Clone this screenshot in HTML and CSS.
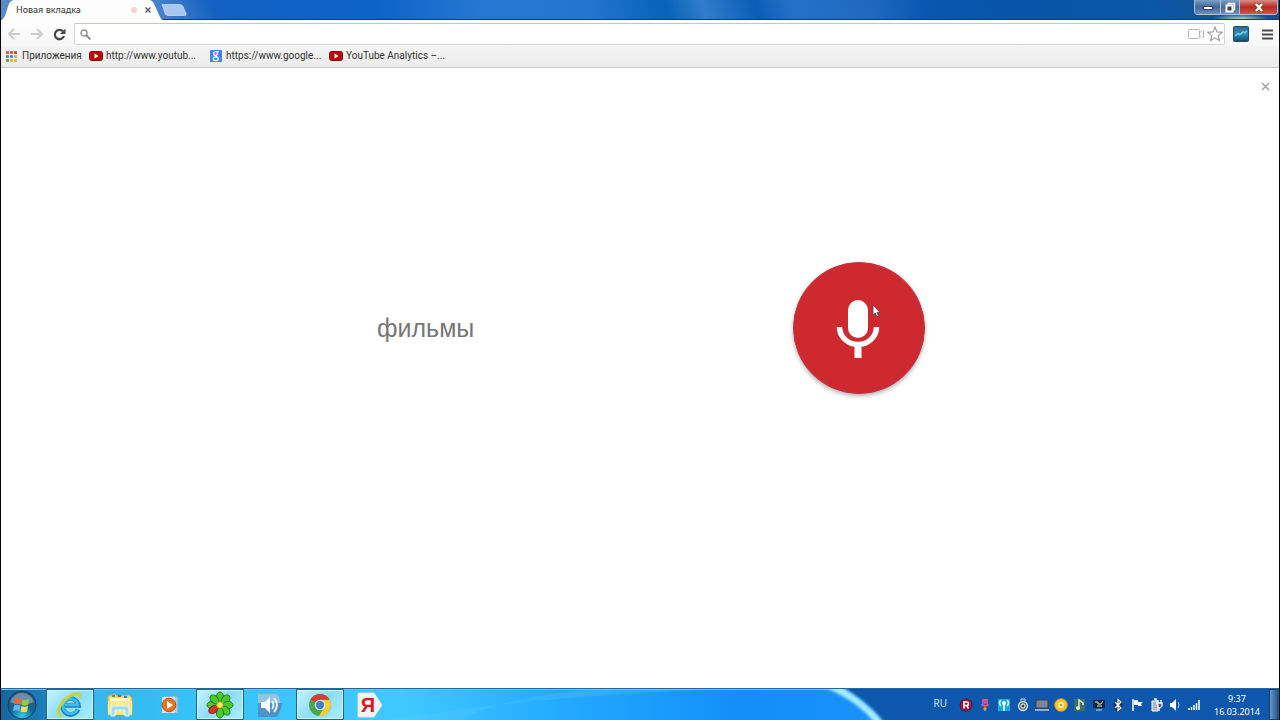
FILE: index.html
```html
<!DOCTYPE html>
<html lang="ru">
<head>
<meta charset="utf-8">
<title>Новая вкладка</title>
<link rel="stylesheet" href="styles.css">
</head>
<body>
<header class="titlebar">
  <div class="tab">
    <svg class="tab-shape" viewBox="0 0 164 20" preserveAspectRatio="none" aria-hidden="true"><path d="M0 20C3 19 4 16 5 13L8 4Q10 0 14 0H150Q153 0 155 4L161 17Q162 20 164 20Z" fill="#fdfdfe"/></svg>
    <span class="tab-title">Новая вкладка</span>
    <span class="tab-dot"></span>
    <button class="tab-close" aria-label="Закрыть вкладку"><svg width="6" height="6" viewBox="0 0 6 6"><path d="M.5.5l5 5M5.5.5l-5 5" stroke="#555" stroke-width="1.4"/></svg></button>
  </div>
  <button class="new-tab" aria-label="Новая вкладка"><svg width="26" height="12" viewBox="0 0 26 12"><path d="M1 .5H19Q21 .5 22 2.500L25 9.500Q25.500 11.500 24 11.500H7Q5 11.500 4 9.500Z" fill="#a9c8ef" stroke="#dcebfb" stroke-opacity=".6"/></svg></button>
  <div class="window-controls">
    <button class="win-min" aria-label="Свернуть"><svg width="10" height="4" viewBox="0 0 10 4"><rect x=".5" y=".5" width="9" height="3" fill="#fff" stroke="#345"/></svg></button>
    <button class="win-restore" aria-label="Восстановить"><svg width="11" height="11" viewBox="0 0 11 11"><path d="M3.500 3V1.500H9.500V7.500H8" fill="none" stroke="#fff" stroke-width="1.500"/><rect x="1.500" y="3.500" width="6" height="6" fill="#345" stroke="#fff" stroke-width="2"/></svg></button>
    <button class="win-close" aria-label="Закрыть"><svg width="10" height="9" viewBox="0 0 10 9"><path d="M2 1l6 7M8 1L2 8" stroke="#633" stroke-width="3.600"/><path d="M2 1l6 7M8 1L2 8" stroke="#fff" stroke-width="2.400"/></svg></button>
  </div>
</header>
<nav class="toolbar">
  <button aria-label="Назад"><svg width="14" height="12" viewBox="0 0 14 12"><path d="M7 1L2 6l5 5M2 6h11" fill="none" stroke="#ccc" stroke-width="2"/></svg></button>
  <button aria-label="Вперёд"><svg width="14" height="12" viewBox="0 0 14 12"><path d="M7 1l5 5-5 5M12 6H1" fill="none" stroke="#ccc" stroke-width="2"/></svg></button>
  <button aria-label="Обновить"><svg width="13" height="13" viewBox="0 0 13 13"><path d="M10 3.300A4.700 4.700 0 1 0 11 8" fill="none" stroke="#484848" stroke-width="2.300"/><path d="M12.500.5V6H7Z" fill="#484848"/></svg></button>
  <div class="omnibox">
    <svg width="11" height="11" viewBox="0 0 11 11"><circle cx="4" cy="4" r="3" fill="#fff" stroke="#888" stroke-width="1.300"/><path d="M6 6l4.300 4.300" stroke="#888" stroke-width="1.900"/></svg>
    <input type="text" aria-label="Адресная строка">
    <svg width="17" height="12" viewBox="0 0 17 12"><rect x=".5" y="1.500" width="11" height="9" rx="1" fill="#fff" stroke="#b6b6b6"/><path d="M11.500 5L14 2.500M11.500 7L14 9.500M15.500 2V10" stroke="#b6b6b6" fill="none"/></svg>
    <svg width="16" height="16" viewBox="0 0 16 16"><path d="M8 1l2 4.900 5 .4-3.800 3.300 1.200 5L8 11.900l-4.400 2.700 1.200-5L1 6.300l5-.4Z" fill="#fff" stroke="#999" stroke-width="1.100"/></svg>
  </div>
  <button class="extension" aria-label="Расширение"><svg width="16" height="16" viewBox="0 0 16 16"><defs><linearGradient id="ext" x2="0" y2="1"><stop stop-color="#386b8b"/><stop offset=".5" stop-color="#2c8dbb"/><stop offset="1" stop-color="#174b6b"/></linearGradient></defs><rect x=".5" y=".5" width="15" height="15" rx="1" fill="url(#ext)" stroke="#254a60"/><path d="M2 10l3-2.500 2 1L10 6l2 .8L14 5" fill="none" stroke="#65cdef" stroke-width="1.600"/></svg></button>
  <button class="menu" aria-label="Меню"><svg width="11" height="11" viewBox="0 0 11 11"><path d="M0 1.500h11M0 5.500h11M0 9.500h11" stroke="#4a4a4a" stroke-width="2.200"/></svg></button>
</nav>
<nav class="bookmarks">
  <a href="#" class="apps"><svg width="11" height="11" viewBox="0 0 11 11"><path d="M0 1.500h3M4 1.500h3" stroke="#d44a3f" stroke-width="2.600"/><path d="M8 1.500h3" stroke="#b34646" stroke-width="2.600"/><path d="M0 5.500h3" stroke="#4d9a52" stroke-width="2.600"/><path d="M4 5.500h3" stroke="#4883cd" stroke-width="2.600"/><path d="M8 5.500h3M4 9.500h3M8 9.500h3" stroke="#e0aa42" stroke-width="2.600"/><path d="M0 9.500h3" stroke="#4d9a52" stroke-width="2.600"/><path d="M3.500 0v11M7.500 0v11" stroke="#f3f3f3"/></svg><span>Приложения</span></a>
  <a href="#" class="mark"><svg width="14" height="14" viewBox="0 0 14 14"><rect x=".5" y="2.500" width="13" height="9" rx="2" fill="#b80b0b" stroke="#930808"/><path d="M5.500 4.500v5L9.500 7Z" fill="#fff"/></svg><span>http://www.youtub...</span></a>
  <a href="#" class="mark"><svg width="14" height="14" viewBox="0 0 14 14"><rect x="1" y="1" width="12" height="12" rx="1" fill="#4385ed"/><circle cx="6.500" cy="4.500" r="1.900" fill="none" stroke="#fff" stroke-width="1.300"/><ellipse cx="6.800" cy="9.800" rx="2.500" ry="1.900" fill="none" stroke="#fff" stroke-width="1.300"/><path d="M7.500 2.700H10M6.500 6.500L8 8" stroke="#fff" stroke-width="1.200"/></svg><span>https://www.google...</span></a>
  <a href="#" class="mark"><svg width="14" height="14" viewBox="0 0 14 14"><rect x=".5" y="2.500" width="13" height="9" rx="2" fill="#b80b0b" stroke="#930808"/><path d="M5.500 4.500v5L9.500 7Z" fill="#fff"/></svg><span>YouTube Analytics –...</span></a>
</nav>
<main class="page">
  <button class="page-close" aria-label="Закрыть поиск"><svg width="9" height="9" viewBox="0 0 9 9"><path d="M1 1l7 7M8 1L1 8" stroke="#a2a2a2" stroke-width="1.500"/></svg></button>
  <section class="voice">
    <p class="phrase">фильмы</p>
    <button class="mic" aria-label="Голосовой поиск">
      <svg width="44" height="60" viewBox="0 0 44 60"><rect x="12" y="1" width="20" height="38" rx="10" fill="#fff"/><path d="M3.500 28a18.500 17.500 0 0 0 37 0" fill="none" stroke="#fff" stroke-width="5.500"/><path d="M22 46v13" stroke="#fff" stroke-width="7"/></svg>
      <svg class="cursor" width="9" height="14" viewBox="0 0 9 14"><path d="M1 1v10l2.300-2 1.500 3.800 1.700-.7L5 8.500h3Z" fill="#fff" stroke="#444" stroke-width=".8"/></svg>
    </button>
  </section>
</main>
<footer class="taskbar">
  <svg class="streak" viewBox="0 0 1280 31" preserveAspectRatio="none" aria-hidden="true"><defs><filter id="soft"><feGaussianBlur stdDeviation="1.600"/></filter></defs><path d="M390 31Q520 8 720 0H600Q500 8 460 31Z" fill="#5dd0ff" opacity=".25"/><path d="M890-4H1290V35H884Q870 12 836-4Z" fill="#0759ac" filter="url(#soft)"/><path d="M824-2H842Q866 12 884 33H874Q858 12 824-2Z" fill="#a5edff" filter="url(#soft)"/></svg>
  <button class="start" aria-label="Пуск"><svg width="30" height="30" viewBox="0 0 30 30"><defs><radialGradient id="orb" cx=".5" cy=".9" r=".8"><stop stop-color="#35cce8"/><stop offset=".5" stop-color="#116a98"/><stop offset="1" stop-color="#315676"/></radialGradient></defs><circle cx="15" cy="15" r="14" fill="url(#orb)" stroke="#0d3b62"/><path d="M3 12A12.500 12.500 0 0 1 27 12Q15 17 3 12Z" fill="#fff" opacity=".32"/><path d="M8 9q3-2 6.500 0l-1 5.500q-3-1.700-6.500 0Z" fill="#ee6738"/><path d="M15.500 9.500q3 1.400 6.500-.5l-1 6q-3 1.500-6.500 0Z" fill="#8fcc4c"/><path d="M7 15.500q3-1.700 6.500 0l-1 5.500q-3-1.500-6.500 0Z" fill="#63b7ef"/><path d="M14.500 16q3 1.500 6.500 0l-1 5.500q-3 1.500-6.500 0Z" fill="#ffdc51"/></svg></button>
  <div class="tasks">
    <button class="task open" aria-label="Internet Explorer"><svg width="28" height="28" viewBox="0 0 28 28"><path d="M22 18.500A8 8 0 1 1 22.500 14.500H8" fill="none" stroke="#1885c4" stroke-width="4.600"/><path d="M21.600 18A7.500 7.500 0 1 1 22 14H9" fill="none" stroke="#43bce9" stroke-width="2.600"/><path d="M6 25C-4 23 7 6 19 3q6-1 5 4" fill="none" stroke="#c5d342" stroke-width="3"/></svg></button>
    <button class="task" aria-label="Проводник"><svg width="28" height="26" viewBox="0 0 28 26"><path d="M2 4L9 2l2 2 12-1 3 3v16H2Z" fill="#ecd875" stroke="#c9b34f"/><path d="M4 6h20v5H4Z" fill="#fff7c4"/><path d="M6 4h3" stroke="#35a554" stroke-width="2"/><path d="M12 4h3" stroke="#c44" stroke-width="2"/><path d="M18 5h3" stroke="#3b7dc2" stroke-width="2"/><path d="M2 9h24v14H2Z" fill="#f7e995"/><path d="M5 24v-8q0-2 2-2h14q2 0 2 2v8h-4v-6H9v6Z" fill="#9edcf0" stroke="#e5f8f8"/></svg></button>
    <button class="task" aria-label="Проигрыватель"><svg width="20" height="20" viewBox="0 0 20 20"><path d="M4 1h14v17H4Z" fill="#9bcfe9" stroke="#6caed0"/><path d="M2 2h13v16H2Z" fill="#d5e4e9"/><circle cx="9" cy="10" r="6.800" fill="#e77522" stroke="#b85217"/><path d="M7 6v8l6-4Z" fill="#fff"/></svg></button>
    <button class="task open" aria-label="ICQ"><svg width="28" height="28" viewBox="0 0 28 28"><g fill="#4bca29" stroke="#227b18"><ellipse cx="14" cy="6" rx="3.600" ry="5"/><ellipse cx="14" cy="6" rx="3.600" ry="5" transform="rotate(45 14 14)"/><ellipse cx="14" cy="6" rx="3.600" ry="5" transform="rotate(90 14 14)"/><ellipse cx="14" cy="6" rx="3.600" ry="5" transform="rotate(135 14 14)"/><ellipse cx="14" cy="6" rx="3.600" ry="5" transform="rotate(180 14 14)"/><ellipse cx="14" cy="6" rx="3.600" ry="5" transform="rotate(270 14 14)"/><ellipse cx="14" cy="6" rx="3.600" ry="5" transform="rotate(315 14 14)"/></g><ellipse cx="14" cy="6" rx="3.500" ry="5" transform="rotate(236 14 14)" fill="#d53528" stroke="#811c18"/><circle cx="14" cy="14" r="3.300" fill="#ffe55c" stroke="#aaa32b"/></svg></button>
    <button class="task" aria-label="Звук"><svg width="26" height="26" viewBox="0 0 26 26"><path d="M1 2h17q3 0 4 3l3 8-3 9q-1 3-4 3H1Z" fill="#4f92c5"/><path d="M1 2h17q3 0 4 3l2 6H1Z" fill="#93c5e3"/><path d="M4 10h4l5-5v16l-5-5H4Z" fill="#fff"/><path d="M15 9q3 4 0 8M17 6q6 7 0 14" fill="none" stroke="#fff" stroke-width="1.800"/></svg></button>
    <button class="task open" aria-label="Google Chrome"><svg width="24" height="24" viewBox="0 0 24 24"><circle cx="12" cy="12" r="11" fill="#48a74a"/><path d="M12 12L2.500 6.500A11 11 0 0 1 21.500 6.500H12Z" fill="#dd3b32"/><path d="M12 7h9.800A11 11 0 0 1 11 23L16.500 14Z" fill="#f5ce35"/><circle cx="12" cy="12" r="5.300" fill="#f4f4ef"/><circle cx="12" cy="12" r="4.200" fill="#3b83d0"/></svg></button>
    <button class="task yandex" aria-label="Яндекс"><svg width="26" height="26" viewBox="0 0 26 26" aria-hidden="true"><path d="M2 1h15l8 12-8 12H2q-1 0-1-1V2q0-1 1-1Z" fill="#f6f4f3" stroke="#d9e5e9"/></svg><span>Я</span></button>
  </div>
  <div class="tray">
    <span class="lang">RU</span>
    <div class="tray-icons">
      <svg viewBox="0 0 14 14"><circle cx="7" cy="7" r="6" fill="#a11441" stroke="#59152e"/><path d="M5 10.500V4h2.500q2 0 2 1.800t-2 1.800H5M7.500 7.500l2 3" fill="none" stroke="#fff" stroke-width="1.500"/></svg>
      <svg viewBox="0 0 14 14"><path d="M4 1h6v5H4Z" fill="#a95aa5"/><path d="M5 2h4M3.500 6q3.500 4 7 0M7 8v4" stroke="#ef5262" stroke-width="2" fill="none"/><path d="M5 10h4l-2 3.500Z" fill="#e3a43b"/></svg>
      <svg viewBox="0 0 14 14"><rect x="1" y="1" width="12" height="12" fill="#15a9df"/><circle cx="7" cy="5" r="2" fill="#fff"/><path d="M7 5v8M4 8Q1 5 4 2M10 8q3-3 0-6" stroke="#fff" stroke-width="1.500" fill="none"/></svg>
      <svg viewBox="0 0 14 14"><path d="M5 3V1h4v2" fill="none" stroke="#d6e0e4"/><circle cx="7" cy="8" r="4.500" fill="#60777d" stroke="#d9e0df" stroke-width="1.300"/><circle cx="7" cy="8" r="2" fill="#253847" stroke="#fff"/></svg>
      <svg viewBox="0 0 14 14"><rect x="1" y="2" width="12" height="8" fill="#7e8795" stroke="#303f55"/><path d="M0 12h14" stroke="#c4cfdd" stroke-width="1.500"/></svg>
      <svg viewBox="0 0 14 14"><circle cx="7" cy="7" r="6.300" fill="#f8c42d" stroke="#d29825"/><circle cx="7" cy="7" r="3" fill="#fff3a8"/><circle cx="7" cy="7" r="1.300" fill="#c89423"/></svg>
      <svg viewBox="0 0 14 14"><rect x="1" y="1" width="11" height="12" fill="#406b70"/><path d="M6 10V2l4 3v2" fill="none" stroke="#e8f4bd" stroke-width="1.400"/><circle cx="5" cy="10" r="2" fill="#e8f4bd"/></svg>
      <svg viewBox="0 0 14 14"><rect x="1" y="2" width="12" height="8" fill="#122738"/><path d="M3 4h3v2h3l2-3M4 12h6M5 8h5" fill="none" stroke="#d5dfe4"/></svg>
      <svg viewBox="0 0 14 14"><ellipse cx="7" cy="7" rx="4.500" ry="6.500" fill="#123464"/><path d="M4 4l6 6-3 2.500v-11L10 4l-6 6" fill="none" stroke="#fff" stroke-width="1.200"/></svg>
      <svg viewBox="0 0 14 14"><path d="M3 1v12" stroke="#fff" stroke-width="1.500"/><path d="M4 2h4v2h5l-2 2 1 2H8V7H4Z" fill="#fff"/></svg>
      <svg viewBox="0 0 14 14"><path d="M3 3h6v10H3Z" fill="#a9b9c6" stroke="#fff"/><path d="M5 1h2v2M9 2v3M12 2v3M8 5h5v3q-2 3-4 1ZM10 9v4" fill="none" stroke="#fff" stroke-width="1.300"/><path d="M9 7h3" stroke="#d44"/></svg>
      <svg viewBox="0 0 14 14"><path d="M2 5h2l4-4v12L4 9H2Z" fill="#fff"/><path d="M10 4q2 3 0 6" fill="none" stroke="#a8c7ea"/></svg>
      <svg viewBox="0 0 14 14"><path d="M2 12V10M4.500 12V9M7 12V7M9.500 12V5M12 12V2" stroke="#fff" stroke-width="1.500"/></svg>
    </div>
    <time class="clock" datetime="2014-03-16T09:37">9:37<br>16.03.2014</time>
  </div>
  <button class="show-desktop" aria-label="Показать рабочий стол"></button>
</footer>
</body>
</html>
```
FILE: styles.css
```css
* { box-sizing: border-box; }
body {
  margin: 0;
  min-height: 100vh;
  display: flex;
  flex-direction: column;
  background: #fff;
  border: solid #0a0a0a;
  border-width: 0 1px;
  font: 10px/14px "Noto Sans", sans-serif;
  color: #333;
}
button {
  display: flex;
  align-items: center;
  justify-content: center;
  padding: 0;
  border: 0;
  background: none;
  font: inherit;
}
svg { display: block; flex: none; }
.titlebar {
  display: flex;
  height: 20px;
  border-bottom: 1px solid #173c70;
  background:
    radial-gradient(ellipse 28px 5px at 97% 100%, #b5d2c2, transparent),
    linear-gradient(75deg, #5a8ac5 0, #4c85cc 12%, #1260c3 17%, #0d62c7 29%, #2678d3 38%, #2475cf 46%, #0762b8 52%, #2f7dcb 55%, #0a5eb7 59%, #2470c8 62%, #2069c1 68%, #0858b1 72%, #0754a8 80%, #0b57a8 90%, #1b4d84 100%);
}
.tab {
  position: relative;
  display: flex;
  align-items: center;
  width: 162px;
  height: 20px;
  padding: 0 11px 0 15px;
}
.tab-shape { position: absolute; inset: 0; width: 100%; height: 100%; }
.tab-title { position: relative; flex: 1; font-size: 9px; }
.tab-dot { position: relative; width: 6px; height: 6px; margin-right: 7px; border-radius: 50%; background: #f8d3d2; }
.tab-close { position: relative; width: 8px; height: 14px; }
.new-tab { height: 20px; margin-left: -2px; }
.window-controls {
  display: flex;
  height: 15px;
  margin-left: auto;
  margin-right: 1px;
  border: solid #a8c0dc;
  border-width: 0 1px 1px;
  border-radius: 0 0 4px 4px;
  overflow: hidden;
}
.window-controls button { background: linear-gradient(#7d9fc7, #436896 50%, #6f91b8); }
.window-controls .win-min { width: 25px; align-items: end; padding-bottom: 4px; }
.window-controls .win-restore { width: 20px; border: solid #a8c0dc; border-width: 0 1px; }
.window-controls .win-close { width: 37px; background: linear-gradient(#d98f85, #b82824 50%, #ce5747); }
.toolbar {
  display: flex;
  align-items: center;
  height: 26px;
  padding: 3px 5px 1px;
  gap: 7px;
  background: linear-gradient(#fefefe, #f7f7f7);
}
.toolbar button { padding: 0 1px; }
.omnibox {
  flex: 1;
  display: flex;
  align-items: center;
  gap: 2px;
  height: 22px;
  padding: 0 1px 0 5px;
  border: 1px solid #d5d5d5;
  border-top-color: #d9bfb5;
  border-radius: 2px;
  background: #fff;
}
.omnibox input { flex: 1; min-width: 0; border: 0; outline: 0; background: none; font: inherit; }
.menu { margin-left: 4px; }
.bookmarks {
  display: flex;
  align-items: center;
  height: 22px;
  gap: 9px;
  padding: 0 5px 1px;
  background: linear-gradient(#f4f4f4, #ebebeb);
  border-bottom: 1px solid #c4c4c4;
  font-family: Roboto, "Noto Sans", sans-serif;
}
.bookmarks a { display: flex; align-items: center; gap: 3px; color: #333; text-decoration: none; white-space: nowrap; }
.bookmarks .apps { gap: 5px; width: 74px; }
.bookmarks .mark { width: 111px; }
.page { position: relative; flex: 1; padding: 194px 24px 24px; }
.page-close { position: absolute; top: 12px; right: 7px; width: 13px; height: 13px; }
.voice {
  display: flex;
  align-items: center;
  justify-content: space-between;
  max-width: 570px;
  margin: 0 auto;
  padding-left: 22px;
}
.phrase { margin: 0; font: 25px/32px "Liberation Sans", Arial, sans-serif; color: #777; }
.mic {
  position: relative;
  width: 132px;
  height: 132px;
  padding: 2px 2px 0 0;
  border: 1px solid #bc3541;
  border-radius: 50%;
  background: #cf2930;
  box-shadow: 0 2px 4px rgba(0, 0, 0, .3);
}
.cursor { position: absolute; left: 78px; top: 41px; }
.taskbar {
  position: relative;
  display: flex;
  height: 32px;
  border-top: 1px solid #24669f;
  background: linear-gradient(90deg, #17659f 0, #1a78b4 36px, #35b5ec 90px, #35c4f8 200px, #40c9ff 400px, #22aaff 560px, #128ff8 740px, #1991fa 860px);
  box-shadow: inset 0 1px #77bfe8;
}
.streak { position: absolute; inset: 0; width: 100%; height: 100%; }
.start { position: relative; width: 45px; padding-right: 4px; }
.tasks { position: relative; display: flex; gap: 2px; }
.task { width: 48px; height: 31px; }
.task.open { border: 1px solid #286584; background: linear-gradient(135deg, #c5f3ff, #8ddcf6 50%, #a9eeff); box-shadow: inset 0 0 0 1px #c9f6ff; }
.yandex { display: grid; place-items: center; }
.yandex svg, .yandex span { grid-area: 1 / 1; }
.yandex span { padding-right: 4px; font: bold 20px/24px "Liberation Sans", Arial, sans-serif; color: #d71920; }
.tray { position: relative; display: flex; align-items: center; margin-left: auto; color: #fff; }
.lang { margin-right: 12px; padding-bottom: 4px; color: #cce4fa; }
.tray-icons { display: flex; gap: 5px; margin-right: 13px; }
.tray-icons svg { width: 14px; height: 14px; }
.clock { font-size: 9px; line-height: 13px; text-align: center; }
.show-desktop { position: relative; width: 10px; margin-left: 9px; border: 1px solid #14406e; border-right: 0; background: linear-gradient(90deg, #6b96c1, #164f8b); }
```
